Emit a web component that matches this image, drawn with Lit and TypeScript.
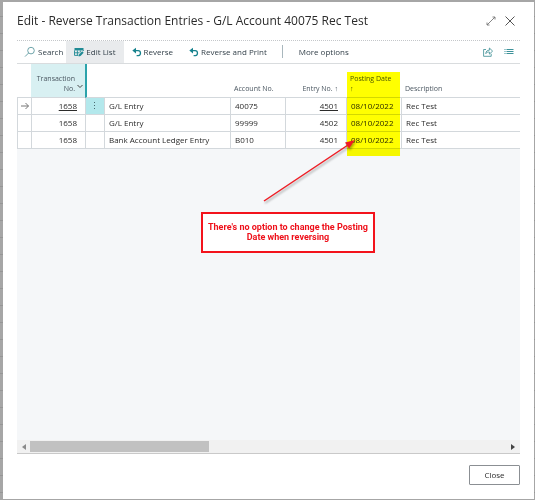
import { LitElement, html, css, svg, nothing } from "lit";
import { customElement } from "lit/decorators.js";

interface Entry {
  transaction: string;
  type: string;
  account: string;
  entry: string;
  date: string;
  description: string;
}

const ENTRIES: Entry[] = [
  { transaction: "1658", type: "G/L Entry", account: "40075", entry: "4501", date: "08/10/2022", description: "Rec Test" },
  { transaction: "1658", type: "G/L Entry", account: "99999", entry: "4502", date: "08/10/2022", description: "Rec Test" },
  { transaction: "1658", type: "Bank Account Ledger Entry", account: "B010", entry: "4501", date: "08/10/2022", description: "Rec Test" },
];

const searchIcon = svg`<svg width="12" height="12" viewBox="0 0 12 12" fill="none" stroke="#5f9aa0" stroke-width=".9" aria-hidden="true"><circle cx="7" cy="4.600" r="3.300"/><path d="M4.600 7 1 10.600"/></svg>`;
const editListIcon = svg`<svg width="10" height="10" viewBox="0 0 10 10" aria-hidden="true"><path d="M.5 1h9v2.400h-9z" fill="#1f8a94"/><path d="M.5 3.400v5h4M.5 5.800h5M3.400 3.400v5M6.300 3.400v2M9.300 3v1" fill="none" stroke="#1f8a94" stroke-width=".9"/><path d="M4.600 9.600 5 7.600 8.200 4.300l1.500 1.500L6.500 9z" fill="#1f8a94"/></svg>`;
const undoIcon = svg`<svg width="10" height="10" viewBox="0 0 10 10" aria-hidden="true"><path d="M.3 3.600 4 .8v5.600z" fill="#17828d"/><path d="M3 3.600h3.200c3 0 3 4.600.2 5.100H4.600" fill="none" stroke="#17828d" stroke-width="1.300"/></svg>`;
const shareIcon = svg`<svg width="10" height="10" viewBox="0 0 10 10" fill="none" stroke="#4d979d" stroke-width=".9" aria-hidden="true"><path d="M3 2.500H.6v6.800h7.600V6.800"/><path d="M2.800 6.600c.2-2.400 1.400-3.400 3.600-3.400V1l3.200 3.100-3.200 3V5c-1.600-.1-2.700.3-3.600 1.600z"/></svg>`;
const listIcon = svg`<svg width="10" height="10" viewBox="0 0 10 10" stroke="#3d929a" aria-hidden="true"><path d="M.5 2.500h1M2.500 2.500h7M.5 4.500h1M2.500 4.500h7M.5 6.500h1M2.500 6.500h7"/></svg>`;
const expandIcon = svg`<svg width="10" height="10" viewBox="0 0 10 10" fill="none" stroke="#777" stroke-width=".9" aria-hidden="true"><path d="M1 9 9 1M6.500 1H9v2.500M1 6.500V9h2.500"/></svg>`;
const closeIcon = svg`<svg width="10" height="10" viewBox="0 0 10 10" fill="none" stroke="#555" aria-hidden="true"><path d="m.5.5 9 9M9.500.5l-9 9"/></svg>`;
const rowArrow = svg`<svg width="8" height="8" viewBox="0 0 8 8" fill="none" stroke="#666" stroke-width=".9" aria-hidden="true"><path d="M0 4h7.400M4.500 1l3 3-3 3"/></svg>`;
const menuDots = svg`<svg width="2" height="10" viewBox="0 0 2 10" fill="#4a6a70" aria-hidden="true"><path d="M0 1h1v1H0zM0 4h1v1H0zM0 7h1v1H0z"/></svg>`;

@customElement("app-root")
export class AppRoot extends LitElement {
  static styles = css`
    :host {
      display: flex;
      min-height: 100vh;
      box-sizing: border-box;
      padding: 2px 1px 1px 3px;
      background: repeating-linear-gradient(#a6a6a6 0 16px, #969696 16px 17px);
      font-family: "Open Sans", "Noto Sans", sans-serif;
      font-size: 8px;
      line-height: 12px;
      color: #2b2b2b;
    }
    * { box-sizing: border-box; }
    button { font: inherit; color: inherit; border: 0; padding: 0; background: none; }
    svg { display: block; flex: none; }
    .dialog {
      flex: 1;
      min-width: 0;
      display: flex;
      flex-direction: column;
      padding: 0 14px 14px;
      background: #fff;
    }
    .head { display: flex; align-items: center; height: 38px; padding-right: 5px; }
    h1 { flex: 1; margin: 0; font-size: 12px; line-height: 18px; font-weight: 500; white-space: nowrap; }
    .icons { display: flex; gap: 9px; }
    .bar {
      display: flex;
      height: 24px;
      border-top: 1px dotted #c4c7ca;
      border-bottom: 1px solid #d9dcde;
    }
    .action { display: flex; align-items: center; gap: 2px; padding: 0 8px; white-space: nowrap; color: #35424b; }
    .search { padding: 0 3px 0 7px; }
    .active { background: #e9ebed; }
    .divider { width: 1px; margin: 4px 8px 5px 7px; background: #a9b7bd; }
    .tools { display: flex; align-items: center; gap: 11px; margin-left: auto; padding-right: 6px; }
    .list { flex: 1; position: relative; background: #f5f7f9; }
    table { width: 100%; table-layout: fixed; border-collapse: separate; border-spacing: 0; background: #fff; }
    th {
      position: relative;
      height: 34px;
      padding: 0 4px 3px;
      border-bottom: 1px solid #d3d8dc;
      vertical-align: bottom;
      text-align: left;
      font-size: 7px;
      line-height: 10px;
      font-weight: 400;
      color: #4a5660;
      white-space: nowrap;
    }
    td {
      height: 17px;
      padding: 0 4px;
      border-bottom: 1px solid #d3d8dc;
      border-left: 1px solid #d3d8dc;
      line-height: 16px;
      white-space: nowrap;
    }
    .c-sel { width: 14px; }
    .c-trans { width: 54px; }
    .c-menu { width: 19px; }
    .c-type { width: 126px; }
    .c-acc { width: 55px; }
    .c-entry { width: 61px; }
    .c-date { width: 55px; }
    .num { text-align: right; padding-right: 8px; }
    .sorted { padding-right: 10px; background: #d8f0f2; }
    .c-menu { border-left: 2px solid #2ba3ab; }
    .chevron { position: absolute; right: 2px; bottom: 8px; }
    .sel, .menu { padding: 0; }
    .sel svg, .menu svg { margin: 0 auto; }
    .menu.on { background: #b3e8ec; }
    a { color: inherit; text-underline-offset: 1px; }
    .highlight {
      position: absolute;
      z-index: 1;
      left: 1px;
      top: 8px;
      width: 53px;
      height: 84px;
      background: #ff0;
      mix-blend-mode: multiply;
    }
    .arrow { position: absolute; z-index: 2; left: 244px; top: 73px; filter: drop-shadow(1px 2px 1px #0005); }
    .callout {
      position: absolute;
      left: 184px;
      top: 148px;
      width: 174px;
      padding: 8px 0 9px;
      border: 2px solid #f3131c;
      background: #fff;
      color: #ee101a;
      font: 700 9px/10px Roboto, "Liberation Sans", sans-serif;
      text-align: center;
    }
    .scroll {
      display: flex;
      align-items: center;
      height: 14px;
      padding: 0 5px;
      border-bottom: 1px solid #c9c9c9;
      background: #f1f1f1;
    }
    .track { flex: 1; height: 11px; margin: 0 9px 0 4px; }
    .thumb { width: 38%; height: 11px; background: #c1c1c1; }
    .foot { display: flex; justify-content: flex-end; padding-top: 11px; }
    .close { width: 51px; height: 20px; border: 1px solid #8b8f93; border-radius: 1px; }
  `;

  render() {
    return html`
      <main class="dialog">
        <header class="head">
          <h1>Edit - Reverse Transaction Entries - G/L Account 40075 Rec Test</h1>
          <div class="icons">
            <button aria-label="Expand">${expandIcon}</button>
            <button aria-label="Close dialog">${closeIcon}</button>
          </div>
        </header>
        <nav class="bar">
          <button class="action search">${searchIcon}Search</button>
          <button class="action active">${editListIcon}Edit List</button>
          <button class="action">${undoIcon}Reverse</button>
          <button class="action">${undoIcon}Reverse and Print</button>
          <span class="divider"></span>
          <button class="action">More options</button>
          <div class="tools">
            <button aria-label="Share">${shareIcon}</button>
            <button aria-label="Show as list">${listIcon}</button>
          </div>
        </nav>
        <section class="list">
          <table>
            <thead>
              <tr>
                <th class="c-sel"></th>
                <th class="c-trans num sorted">
                  Transaction<br />No.
                  <svg class="chevron" width="6" height="5" viewBox="0 0 6 5" fill="none" stroke="#444"><path d="m.5 1 2.500 2.500L5.500 1" /></svg>
                </th>
                <th class="c-menu"></th>
                <th class="c-type"></th>
                <th class="c-acc">Account No.</th>
                <th class="c-entry num">Entry No. ↑</th>
                <th class="c-date">Posting Date<br />↑<div class="highlight"></div></th>
                <th>Description</th>
              </tr>
            </thead>
            <tbody>
              ${ENTRIES.map((e, i) => html`
                <tr>
                  <td class="sel">${i === 0 ? rowArrow : nothing}</td>
                  <td class="num">${i === 0 ? html`<a href="#">${e.transaction}</a>` : e.transaction}</td>
                  <td class="menu ${i === 0 ? "on" : ""}">${i === 0 ? menuDots : nothing}</td>
                  <td>${e.type}</td>
                  <td>${e.account}</td>
                  <td class="num">${i === 0 ? html`<a href="#">${e.entry}</a>` : e.entry}</td>
                  <td>${e.date}</td>
                  <td>${e.description}</td>
                </tr>`)}
            </tbody>
          </table>
          <svg class="arrow" width="98" height="68" viewBox="0 0 98 68" aria-hidden="true">
            <path d="M3 64 87 8" stroke="#ee1c24" stroke-width="1.500" />
            <path d="m94 3-10 2.500 4 6z" fill="#ee1c24" />
          </svg>
          <div class="callout">There's no option to change the Posting Date when reversing</div>
        </section>
        <div class="scroll">
          <svg width="4" height="6" viewBox="0 0 4 6" fill="#8a8a8a"><path d="M4 0v6L0 3z" /></svg>
          <div class="track"><div class="thumb"></div></div>
          <svg width="4" height="6" viewBox="0 0 4 6" fill="#444"><path d="M0 0v6l4-3z" /></svg>
        </div>
        <footer class="foot"><button class="close">Close</button></footer>
      </main>
    `;
  }
}
